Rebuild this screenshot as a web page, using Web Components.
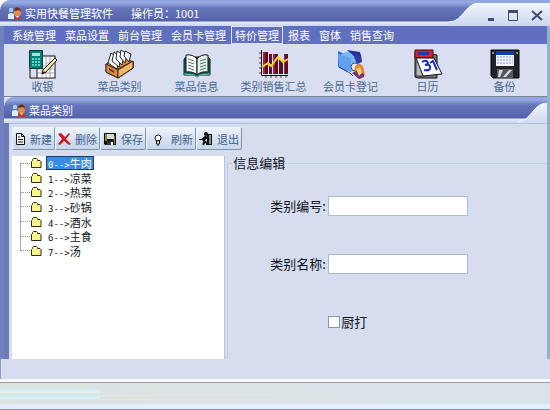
<!DOCTYPE html>
<html lang="zh-CN">
<head>
<meta charset="utf-8">
<title>实用快餐管理软件</title>
<style>
  body {
    margin: 0;
    font: 11px/14px "Noto Sans CJK SC", sans-serif;
    color: #10131c;
    background: #fff;
  }
</style>
</head>
<body>
<food-app></food-app>

<script>
const people = `
  <svg width="14" height="13" viewBox="0 0 14 13" aria-hidden="true">
    <rect x="1" y="1" width="4" height="4" rx="1" fill="#8fd6f2"/>
    <path d="M0 12V8q0-2 3-2t3 2v4z" fill="#d9f1fb"/>
    <path d="M6 4q0-3 3.500-3T13 4v3q-1 3-3.500 3T6 7z" fill="#e58a4e"/>
    <path d="M6 4q0-4 4-3.500Q13 1 13 5L11 3z" fill="#6b2b1d"/>
    <path d="M6 12q0-3 3.500-3t3.500 3v1H6z" fill="#b5402b"/>
    <path d="M8 9l1.500 2L11 9z" fill="#fff"/>
  </svg>`;

const icons = {
  cash: `
    <rect x="9" y="7" width="18" height="22" fill="#fff" stroke="#111"/>
    <path d="M10 20h16M10 24h16M18 8v20M22 8v20" stroke="#9aa3ad"/>
    <path d="M18 14h9M10 17h17M14 20v8" stroke="#e39aa8"/>
    <path d="M1.500 1.500h13v18h-13z" fill="#087f79" stroke="#063c3d"/>
    <path d="M4 4h8v3H4z" fill="#9ee6dc"/>
    <path d="M4 10h2M7 10h2M10 10h2M4 13h2M7 13h2M10 13h2M4 16h2M7 16h2M10 16h2" stroke="#5cd8cb" stroke-width="2"/>
    <path d="M2 20v9h7" fill="none" stroke="#111"/>
    <path d="M27 9l2 2-11 12-4 2 1-4z" fill="#f4efa5" stroke="#111"/>
    <path d="M14 25l2-3 1 2z" fill="#111"/>`,
  box: `
    <path d="M1 15L15 6l13 7v6L13 29 1 23z" fill="#d88b41" stroke="#3c2315"/>
    <path d="M13 20l15-8v7L13 29z" fill="#f3b765" stroke="#3c2315"/>
    <path d="M3 14L6 4l8 5-2 11z" fill="#fff" stroke="#222"/>
    <path d="M7 12L9 3l7 5-2 10z" fill="#fff" stroke="#222"/>
    <path d="M11 10l1-8 7 4-2 10z" fill="#fff" stroke="#222"/>
    <path d="M15 8l1-7 6 4-2 9z" fill="#fff" stroke="#222"/>
    <path d="M19 7l1-5 6 3-2 8z" fill="#eef0f4" stroke="#222"/>
    <path d="M1 15l12 6v8L1 23z" fill="#d88b41" stroke="#3c2315"/>
    <path d="M13 21l15-9v7L13 29z" fill="#f3b765" stroke="#3c2315"/>
    <path d="M4 19l5 3v2l-5-3z" fill="#613513"/>`,
  book: `
    <path d="M4 8L2 10v16h10l3 2 3-2h10V10l-2-2z" fill="#116b68" stroke="#0c1819"/>
    <path d="M4 6q7-1 11 4v16q-4-4-11-3z" fill="#fff" stroke="#111"/>
    <path d="M26 6q-7-1-11 4v16q4-4 11-3z" fill="#e5eee7" stroke="#111"/>
    <path d="M6 10l6 2M6 13l6 2M6 16l6 2M6 19l6 2M24 10l-6 2M24 13l-6 2M24 16l-6 2M24 19l-6 2" stroke="#43776c"/>
    <path d="M2 25l10 1 3 2 3-2 10-1" fill="none" stroke="#6fc0b5"/>`,
  chart: `
    <path d="M2.500 1v25.500H29" fill="none" stroke="#111"/>
    <path d="M0 4h2M0 9h2M0 14h2M0 19h2M0 24h2M7 27v2M12 27v2M17 27v2M22 27v2M27 27v2" stroke="#444"/>
    <path d="M4 3h5v22H4zM10 5h3v20h-3zM14 5h5v20h-5zM20 11h4v14h-4zM25 5h4v20h-4z" fill="#5c0d28"/>
    <path d="M4 3h2v22H4zM14 5h2v20h-2zM25 5h1v20h-1z" fill="#a5243a"/>
    <path d="M3 18l6-4 3 3 7-9 5 5 5-3" fill="none" stroke="#ffd52d" stroke-width="2"/>`,
  card: `
    <path d="M2 2l9 4v17L4 19 2 18z" fill="#2d6ed8"/>
    <path d="M5 5l8-3 12 3-2 13-8 5-10-5z" fill="#79b8f5"/>
    <path d="M2 5l13 4v14L3 18z" fill="#61a2ef"/>
    <path d="M11 1l13 2 1 6-6-1z" fill="#2b2f91"/>
    <path d="M18 8l7-3 1 8-5 2z" fill="#343a9d"/>
    <circle cx="19" cy="18" r="4" fill="#e7edf3" stroke="#4a5572"/>
    <path d="M19 17q4-4 8 0l2 9-5 4-6-5z" fill="#e78338"/>
    <path d="M16 24l6-3 6 4v3l-5 2z" fill="#74317c"/>
    <path d="M20 20l4-2 2 6-3 3z" fill="#ffcf60"/>
    <path d="M3 18l11 6 3 3" fill="none" stroke="#284e99"/>`,
  calendar: `
    <path d="M2 3v25l3 1h19V6z" fill="#777" stroke="#111"/>
    <path d="M2 1h18v8H2z" fill="#d51f2c" stroke="#32141d"/>
    <path d="M5 3h11v3H5z" fill="#203c9d"/>
    <path d="M3 9h18l8 16-19 2z" fill="#fff" stroke="#111"/>
    <path d="M3 9l7 18H3z" fill="#b8bdc5" stroke="#333"/>
    <path d="M9 13q5-3 6 1-1 2-3 2 5-1 5 2 1 4-6 3M17 14l3-2 4 9" fill="none" stroke="#172bc2" stroke-width="2"/>`,
  disk: `
    <path d="M1 1h28v28H3l-2-2z" fill="#20222a" stroke="#05070a"/>
    <path d="M6 2h18v15H6z" fill="#f3f6ff"/>
    <path d="M6 2h18v4H6z" fill="#1937bd"/>
    <path d="M7 8h16M7 11h16M7 14h16" stroke="#7f99e2" stroke-dasharray="2 1"/>
    <path d="M7 20h16v9H7z" fill="#55575c"/>
    <path d="M9 21h4l-3 7H8zM19 21h3l-6 7h-3z" fill="#d6d7d9"/>
    <path d="M2 3h2v2H2zM26 3h2v2h-2z" fill="#888"/>`
};

// [width, markup], all 16 high
const smallIcons = {
  page: [11, `<path d="M1.500 2.500h5l3 3v8h-8z" fill="#fff" stroke="#111"/><path d="M6.500 2.500v3h3M3 6h2M3 8.500h5M3 11h5" fill="none" stroke="#111"/>`],
  cross: [13, `<path d="M0 3l3-1 4 4 4-4 1 1-4 5 5 5-2 1-5-4-4 4-2-1 4-5z" fill="#c91820"/>`],
  floppy: [14, `<path d="M1 2h12v12H2l-1-1z" fill="#111"/><path d="M2 3h2v7H2zM11 5h1v8h-1z" fill="#8b892e"/><path d="M4 3h7v5H4z" fill="#d5d8dd"/><path d="M4 10h6v4H4z" fill="#333"/><path d="M8 11h2v3H8z" fill="#fff"/>`],
  bulb: [18, `<circle cx="9" cy="7" r="3" fill="#fff" stroke="#111"/><path d="M7.500 10h3v3h-3z" fill="#fff" stroke="#111"/><path d="M8 14h2" stroke="#111"/>`],
  exit: [14, `<path d="M8 3h5v11H8z" fill="#161616"/><path d="M10 4h2v9h-2z" fill="#87909b"/><circle cx="7" cy="3" r="2" fill="#111"/><path d="M7 5L5 10l3 2v2M6 10l-2 4M7 6l3 3M6 6L3 9" fill="none" stroke="#111" stroke-width="2"/><path d="M0 8.500h4" stroke="#111"/>`]
};

const iconSvg = name =>
  `<svg width="30" height="30" viewBox="0 0 30 30" aria-hidden="true">${icons[name]}</svg>`;
const smallSvg = name =>
  `<svg width="${smallIcons[name][0]}" height="16" viewBox="0 0 ${smallIcons[name][0]} 16" aria-hidden="true">${smallIcons[name][1]}</svg>`;

class CaptionBar extends HTMLElement {
  constructor() {
    super();
    this.attachShadow({ mode: 'open' });
  }

  connectedCallback() {
    const controls = this.hasAttribute('controls');
    this.shadowRoot.innerHTML = `
      <style>
        :host {
          display: flex;
          height: 26px;
          color: #fff;
          border-radius: 10px 0 0 0;
          background: linear-gradient(#8fa5e0 0, #94a8e0 3px, #6676ba 8px, #5c6bb2 15px, #5261a8 21px, #e4ebfa 22px, #c8d3ee 26px);
          overflow: hidden;
        }
        .title {
          flex: 1;
          display: flex;
          align-items: center;
          gap: 3px;
          padding-left: 8px;
          white-space: nowrap;
        }
        .tab {
          display: flex;
          align-items: center;
          gap: 12px;
          margin-top: 3px;
          padding: 0 7px 0 8px;
          background: linear-gradient(#f0f4fd, #ccd6ee);
        }
        .curve { display: block; margin-top: 3px; }
        :host(:not([controls])) .curve { margin-top: 6px; }
        button {
          border: 0;
          padding: 0;
          background: none;
          height: 14px;
        }
        button svg { display: block; }
      </style>
      <div class="title">${people}<slot></slot></div>
      <svg class="curve" width="30" height="23" viewBox="0 0 30 23" aria-hidden="true">
        <defs><linearGradient id="g" x1="0" y1="0" x2="0" y2="1">
          <stop offset="0" stop-color="#f0f4fd"/><stop offset="1" stop-color="#ccd6ee"/>
        </linearGradient></defs>
        <path d="M0 19C14 19 16 0 30 0V23H0z" fill="url(#g)"/>
        <path d="M0 19C14 19 16 0 30 0" fill="none" stroke="#f4f8ff"/>
      </svg>
      ${controls ? `
      <div class="tab">
        <button aria-label="最小化"><svg width="8" height="14"><path d="M1 10h6v3H1z" fill="#464b6b"/></svg></button>
        <button aria-label="最大化"><svg width="12" height="14"><path d="M1.500 4v8.500h9V4" fill="none" stroke="#464b6b"/><path d="M1 2h10v3H1z" fill="#464b6b"/></svg></button>
        <button aria-label="关闭"><svg width="12" height="14"><path d="M1 3l10 9M11 3L1 12" stroke="#464b6b" stroke-width="2"/></svg></button>
      </div>` : ''}
    `;
  }
}

class MenuStrip extends HTMLElement {
  constructor() {
    super();
    this.attachShadow({ mode: 'open' });
  }

  connectedCallback() {
    const active = this.getAttribute('active');
    const items = this.getAttribute('items').split(',');
    this.shadowRoot.innerHTML = `
      <style>
        :host {
          display: flex;
          gap: 1px;
          padding-left: 4px;
          height: 18px;
          background: #616fc0;
        }
        button {
          font: inherit;
          color: #fff;
          padding: 0 4px;
          border: 0;
          background: none;
          white-space: nowrap;
        }
        button.active { box-shadow: inset 0 0 0 1px #d9e0fa; }
      </style>
      ${items.map(t => `<button class="${t === active ? 'active' : ''}">${t}</button>`).join('')}
    `;
  }
}

class LaunchButton extends HTMLElement {
  constructor() {
    super();
    this.attachShadow({ mode: 'open' });
  }

  connectedCallback() {
    this.shadowRoot.innerHTML = `
      <style>
        :host { display: block; }
        button {
          display: flex;
          flex-direction: column;
          align-items: center;
          width: 100%;
          padding: 0;
          border: 0;
          background: none;
          font: inherit;
          color: #48698f;
          white-space: nowrap;
        }
      </style>
      <button>${iconSvg(this.getAttribute('icon'))}<slot></slot></button>
    `;
  }
}

class ToolButton extends HTMLElement {
  constructor() {
    super();
    this.attachShadow({ mode: 'open' });
  }

  connectedCallback() {
    this.shadowRoot.innerHTML = `
      <style>
        :host { display: block; }
        button {
          display: flex;
          align-items: center;
          gap: 4px;
          height: 23px;
          padding: 0 2px;
          border: 1px solid;
          border-color: #eef4fc #8093ad #7f92ad #eef4fc;
          border-radius: 2px;
          background: linear-gradient(#edf3fc, #d3dff1 60%, #c8d6ec);
          font: inherit;
          color: #3f6389;
          white-space: nowrap;
        }
      </style>
      <button>${smallSvg(this.getAttribute('icon'))}<slot></slot></button>
    `;
  }
}

class CategoryTree extends HTMLElement {
  constructor() {
    super();
    this.attachShadow({ mode: 'open' });
  }

  connectedCallback() {
    const rows = ['0 牛肉', '1 凉菜', '2 热菜', '3 砂锅', '4 酒水', '6 主食', '7 汤'];
    this.shadowRoot.innerHTML = `
      <style>
        :host {
          display: block;
          background: #fff;
          border-right: 1px solid #b9c3dd;
        }
        ul {
          display: grid;
          grid-auto-rows: minmax(0, 1fr);
          height: 102px;
          margin: 0;
          padding: 0 0 0 8px;
          list-style: none;
        }
        li {
          display: flex;
          align-items: center;
          background: linear-gradient(#a9adb5, #a9adb5) 0 0 / 1px 100% no-repeat;
        }
        li:first-child { background-position: 0 100%; background-size: 1px 50%; }
        li:last-child { background-size: 1px 50%; }
        li::before {
          content: "";
          width: 10px;
          border-top: 1px dotted #8c9098;
        }
        .label {
          margin-left: 4px;
          padding: 0 1px;
          border: 1px solid transparent;
          line-height: 12px;
          white-space: nowrap;
        }
        .label.selected {
          color: #fff;
          background: #3a8de0;
          border-color: #1c3f66;
        }
        .code { font: 9px/1px "DejaVu Sans Mono", monospace; }
      </style>
      <ul>
        ${rows.map((row, i) => {
          const [code, name] = row.split(' ');
          return `<li>
            <svg width="12" height="12" viewBox="0 0 12 12" aria-hidden="true">
              <path d="M1.500 4.500L2.500 3.500V2.500L3.500 1.500H6.500L7.500 2.500V3.500H10L11 4.500V10.500H1.500z" fill="#fbf78c" stroke="#2a2a12"/>
            </svg>
            <span class="label ${i === 0 ? 'selected' : ''}"><span class="code">${code}--&gt;</span>${name}</span>
          </li>`;
        }).join('')}
      </ul>
    `;
  }
}

class CategoryForm extends HTMLElement {
  constructor() {
    super();
    this.attachShadow({ mode: 'open' });
  }

  connectedCallback() {
    this.shadowRoot.innerHTML = `
      <style>
        :host {
          display: flex;
          font-size: 13px;
          line-height: 14px;
        }
        fieldset {
          flex: 1;
          min-width: 0;
          margin: 0;
          padding: 26px 8px 0 42px;
          border: 1px solid #c3cbe3;
          border-width: 1px 0 0 1px;
        }
        legend { padding: 0 1px; margin-left: -38px; }
        .fields {
          display: grid;
          grid-template-columns: 58px minmax(0, 140px);
          grid-auto-rows: 20px;
          row-gap: 38px;
          align-items: center;
        }
        label { white-space: nowrap; }
        input {
          box-sizing: border-box;
          margin: 0;
          border: 1px solid #a9bbd6;
          background: #fff;
        }
        input[type=text] { width: 100%; height: 20px; font: inherit; }
        .check {
          grid-column: 2;
          display: flex;
          align-items: center;
          gap: 1px;
        }
        input[type=checkbox] {
          appearance: none;
          width: 12px;
          height: 12px;
          border-color: #8496b0;
        }
      </style>
      <fieldset>
        <legend>信息编辑</legend>
        <div class="fields">
          <label for="code">类别编号:</label><input id="code" type="text">
          <label for="name">类别名称:</label><input id="name" type="text">
          <div class="check"><input id="print" type="checkbox"><label for="print">厨打</label></div>
        </div>
      </fieldset>
    `;
  }
}

class StatusStrip extends HTMLElement {
  constructor() {
    super();
    this.attachShadow({ mode: 'open' });
  }

  connectedCallback() {
    this.shadowRoot.innerHTML = `
      <style>
        :host {
          display: block;
          border-top: 3px solid #f8fafd;
          border-bottom: 1px solid #8395c4;
        }
        .rule { border-top: 1px solid #9b9d9f; border-bottom: 5px solid #e3edfb; }
        .tray {
          height: 21px;
          background:
            repeating-linear-gradient(#d9e7e4 0 3px, #d3eff8 3px 5px, #e4f0ee 5px 6px) 0 4px / 100px 12px no-repeat,
            linear-gradient(90deg, #e3ebe6, transparent) 100px 12px / 260px 1px no-repeat,
            linear-gradient(90deg, #e3e9dc, transparent) 100px 16px / 200px 1px no-repeat,
            linear-gradient(90deg, #dbe3df, #dbe3ea 70%);
        }
      </style>
      <div class="rule"><div class="tray"></div></div>
    `;
  }
}

class FoodApp extends HTMLElement {
  constructor() {
    super();
    this.attachShadow({ mode: 'open' });
  }

  connectedCallback() {
    this.shadowRoot.innerHTML = `
      <style>
        :host {
          display: flex;
          flex-direction: column;
          min-height: 100vh;
          background: #d6ddef;
          border-radius: 10px 0 0 0;
        }
        .operator { margin-left: 15px; }
        .frame {
          flex: 1;
          display: flex;
          flex-direction: column;
          border-left: 4px solid #7181bf;
          border-right: 3px solid #8fb3cf;
        }
        .launch {
          display: grid;
          grid-template-columns: repeat(7, minmax(0, 1fr));
          padding: 5px 4px 3px 0;
          border-bottom: 1px solid #7b8798;
          background: #d9dff1;
        }
        .child {
          flex: 1;
          display: flex;
          flex-direction: column;
        }
        .body {
          flex: 1;
          display: flex;
          flex-direction: column;
          border-left: 5px solid #6b7bb6;
        }
        .tools {
          display: flex;
          padding: 3px 3px 6px;
          border-top: 1px solid #b7c0d6;
        }
        .split {
          flex: 1;
          display: grid;
          grid-template-columns: minmax(0, 2fr) minmax(0, 3fr);
          column-gap: 2px;
          padding-left: 3px;
        }
        .gap { height: 20px; border-left: 1px solid #8c9cc8; }
      </style>
      <caption-bar controls>实用快餐管理软件<span class="operator">操作员：1001</span></caption-bar>
      <div class="frame">
        <menu-strip active="特价管理" items="系统管理,菜品设置,前台管理,会员卡管理,特价管理,报表,窗体,销售查询"></menu-strip>
        <div class="launch">
          <launch-button icon="cash">收银</launch-button>
          <launch-button icon="box">菜品类别</launch-button>
          <launch-button icon="book">菜品信息</launch-button>
          <launch-button icon="chart">类别销售汇总</launch-button>
          <launch-button icon="card">会员卡登记</launch-button>
          <launch-button icon="calendar">日历</launch-button>
          <launch-button icon="disk">备份</launch-button>
        </div>
        <div class="child">
          <caption-bar>菜品类别</caption-bar>
          <div class="body">
            <div class="tools">
              <tool-button icon="page">新建</tool-button>
              <tool-button icon="cross">删除</tool-button>
              <tool-button icon="floppy">保存</tool-button>
              <tool-button icon="bulb">刷新</tool-button>
              <tool-button icon="exit">退出</tool-button>
            </div>
            <div class="split">
              <category-tree></category-tree>
              <category-form></category-form>
            </div>
          </div>
        </div>
      </div>
      <div class="gap"></div>
      <status-strip></status-strip>
    `;
  }
}

customElements.define('caption-bar', CaptionBar);
customElements.define('menu-strip', MenuStrip);
customElements.define('launch-button', LaunchButton);
customElements.define('tool-button', ToolButton);
customElements.define('category-tree', CategoryTree);
customElements.define('category-form', CategoryForm);
customElements.define('status-strip', StatusStrip);
customElements.define('food-app', FoodApp);
</script>
</body>
</html>
